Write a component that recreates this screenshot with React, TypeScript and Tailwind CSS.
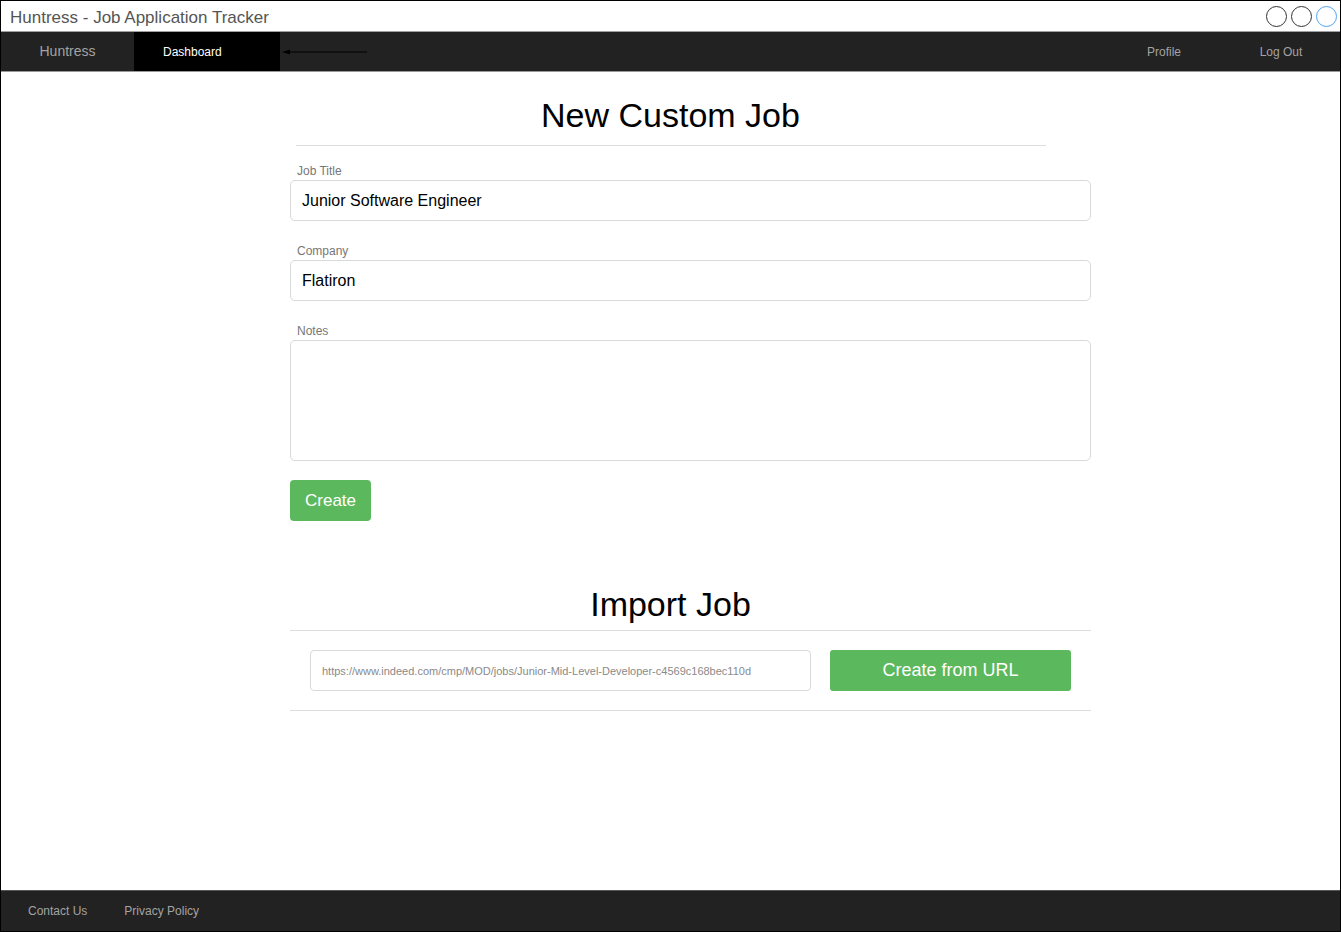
import React from 'react';

const font = { fontFamily: '"Liberation Sans", Arial, sans-serif' };

const Field: React.FC<{ label: string; value?: string; tall?: boolean }> = ({ label, value, tall }) => (
  <div className="flex flex-col">
    <label className="text-[12px] text-[#777] pl-[7px] leading-[14px] mb-[2px]">{label}</label>
    {tall ? (
      <textarea
        className="h-[121px] w-[801px] rounded-[5px] border border-[#d9d9d9] px-3 py-2 text-[16px] text-black resize-none outline-none"
        defaultValue={value}
      />
    ) : (
      <input
        className="h-[41px] w-[801px] rounded-[5px] border border-[#d9d9d9] px-[11px] text-[16px] text-black outline-none"
        defaultValue={value}
      />
    )}
  </div>
);

export default function App() {
  return (
    <div style={font} className="w-[1341px] h-[932px] border border-black bg-white flex flex-col overflow-hidden">
      {/* Title bar */}
      <div className="h-[31px] flex items-center justify-between pl-[9px] pr-[3px] pt-[3px] border-b border-[#a0a0a0]">
        <span className="text-[17px] text-[#555]">Huntress - Job Application Tracker</span>
        <div className="flex gap-[4px] -mt-[3px]">
          <span className="w-[21px] h-[21px] rounded-full border border-[#333]" />
          <span className="w-[21px] h-[21px] rounded-full border border-[#333]" />
          <span className="w-[21px] h-[21px] rounded-full border border-[#4da3f5]" />
        </div>
      </div>

      {/* Nav */}
      <div className="h-[40px] bg-[#222] flex items-stretch border-b border-[#999]">
        <div className="w-[133px] flex items-center justify-center text-[14px] text-[#a3a3a3]">Huntress</div>
        <div className="w-[146px] bg-black flex items-center pl-[29px] text-[12px] text-white">Dashboard</div>
        <div className="flex items-center pl-[2px]">
          <svg width="86" height="8" viewBox="0 0 86 8">
            <line x1="3" y1="4" x2="85" y2="4" stroke="#000" strokeWidth="1" />
            <path d="M0 4 L8 1.5 L8 6.5 Z" fill="#000" />
          </svg>
        </div>
        <div className="flex-1" />
        <div className="w-[116px] flex items-center justify-center text-[12px] text-[#a3a3a3]">Profile</div>
        <div className="w-[118px] flex items-center justify-center text-[12px] text-[#a3a3a3]">Log Out</div>
      </div>

      {/* Content */}
      <div className="flex-1 flex flex-col items-center pt-[23px]">
        <h1 className="text-[34px] text-black text-center leading-[40px]">New Custom Job</h1>
        <div className="mt-[10px] w-[750px] h-px bg-[#ddd]" />

        <div className="w-[801px] ml-[40px] flex flex-col">
          <div className="mt-[18px] flex flex-col gap-[23px]">
            <Field label="Job Title" value="Junior Software Engineer" />
            <Field label="Company" value="Flatiron" />
            <Field label="Notes" tall />
          </div>

          <button className="mt-[19px] w-[81px] h-[41px] rounded-[4px] bg-[#5cb85c] text-white text-[17px]">
            Create
          </button>
        </div>

        <h2 className="mt-[63px] text-[34px] text-black text-center leading-[40px]">Import Job</h2>

        <div className="w-[801px] ml-[40px] flex flex-col">
          <div className="mt-[6px] h-px bg-[#ddd]" />
          <div className="flex items-center gap-[19px] px-[20px] py-[19px]">
            <input
              className="h-[41px] w-[501px] rounded-[4px] border border-[#d9d9d9] px-[11px] text-[11px] text-black outline-none placeholder:text-[#8a8a8a]"
              placeholder="https://www.indeed.com/cmp/MOD/jobs/Junior-Mid-Level-Developer-c4569c168bec110d"
            />
            <button className="h-[41px] w-[241px] rounded-[3px] bg-[#5cb85c] text-white text-[18px]">
              Create from URL
            </button>
          </div>
          <div className="h-px bg-[#ddd]" />
        </div>
      </div>

      {/* Footer */}
      <div className="h-[41px] bg-[#222] border-t border-[#555] flex items-center text-[12px] text-[#a3a3a3]">
        <span className="ml-[27px]">Contact Us</span>
        <span className="ml-[37px]">Privacy Policy</span>
      </div>
    </div>
  );
}
